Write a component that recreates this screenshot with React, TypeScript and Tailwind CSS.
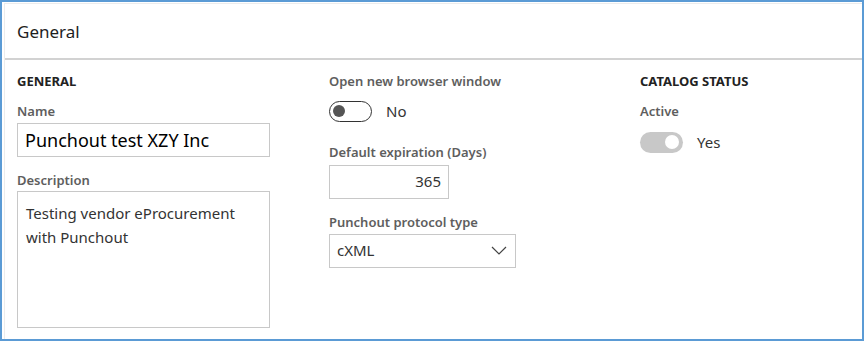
const font = { fontFamily: '"Segoe UI", "Noto Sans", "Open Sans", sans-serif' };

function Toggle({ on, disabled }: { on: boolean; disabled?: boolean }) {
  if (disabled) {
    return (
      <div className="flex h-[21px] w-[43px] items-center justify-end rounded-full bg-[#c8c8c8] px-[4px]">
        <div className="h-[14px] w-[14px] rounded-full bg-white" />
      </div>
    );
  }
  return (
    <div className="flex h-[21px] w-[43px] items-center rounded-full border-[1.5px] border-[#333333] px-[3px]">
      <div className={`h-[12px] w-[12px] rounded-full bg-[#555555] ${on ? "ml-auto" : ""}`} />
    </div>
  );
}

function Label({ children }: { children: string }) {
  return <div className="text-[13px] leading-[18px] font-semibold text-[#5e5e5e]">{children}</div>;
}

export default function App() {
  return (
    <div className="h-[341px] w-[864px] overflow-hidden border-2 border-[#5b9bd5] bg-white" style={font}>
      <div className="ml-[2px] mt-[1px] h-full border-l border-t border-[#ececec]">
        <div className="flex h-[56px] items-center border-b-2 border-[#d2d2d2] pl-[12px] pt-[1px] text-[17px] text-[#1e1e1e]">General</div>
        <div className="grid grid-cols-[312px_311px_1fr] pl-[12px] pt-[12px] text-[#333333]">
          <div className="flex flex-col">
            <div className="text-[13px] leading-[18px] font-bold text-[#222222]">GENERAL</div>
            <div className="mt-[12px]"><Label>Name</Label></div>
            <div className="mt-[3px] flex h-[34px] w-[253px] items-center border border-[#c8c8c8] px-[7px] text-[18px] text-black">Punchout test XZY Inc</div>
            <div className="mt-[14px]"><Label>Description</Label></div>
            <div className="mt-[2px] h-[137px] w-[253px] border border-[#c8c8c8] px-[8px] pt-[9px] text-[15px] leading-[24px] text-[#333333]">
              Testing vendor eProcurement
              <br />
              with Punchout
            </div>
          </div>
          <div className="flex flex-col">
            <Label>Open new browser window</Label>
            <div className="mt-[10px] flex items-center gap-[14px]">
              <Toggle on={false} />
              <span className="text-[15px] text-[#333333]">No</span>
            </div>
            <div className="mt-[20px]"><Label>Default expiration (Days)</Label></div>
            <div className="mt-[4px] flex h-[34px] w-[120px] items-center justify-end border border-[#c8c8c8] px-[7px] text-[15px]">365</div>
            <div className="mt-[14px]"><Label>Punchout protocol type</Label></div>
            <div className="mt-[3px] flex h-[34px] w-[187px] items-center justify-between border border-[#c8c8c8] pl-[7px] pr-[8px] text-[15px]">
              <span>cXML</span>
              <svg width="16" height="9" viewBox="0 0 16 9" fill="none">
                <path d="M1 1l7 7 7-7" stroke="#444" strokeWidth="1.2" />
              </svg>
            </div>
          </div>
          <div className="flex flex-col">
            <div className="text-[13px] leading-[18px] font-bold text-[#222222]">CATALOG STATUS</div>
            <div className="mt-[12px]"><Label>Active</Label></div>
            <div className="mt-[11px] flex items-center gap-[14px]">
              <Toggle on disabled />
              <span className="text-[15px] text-[#333333]">Yes</span>
            </div>
          </div>
        </div>
      </div>
    </div>
  );
}
